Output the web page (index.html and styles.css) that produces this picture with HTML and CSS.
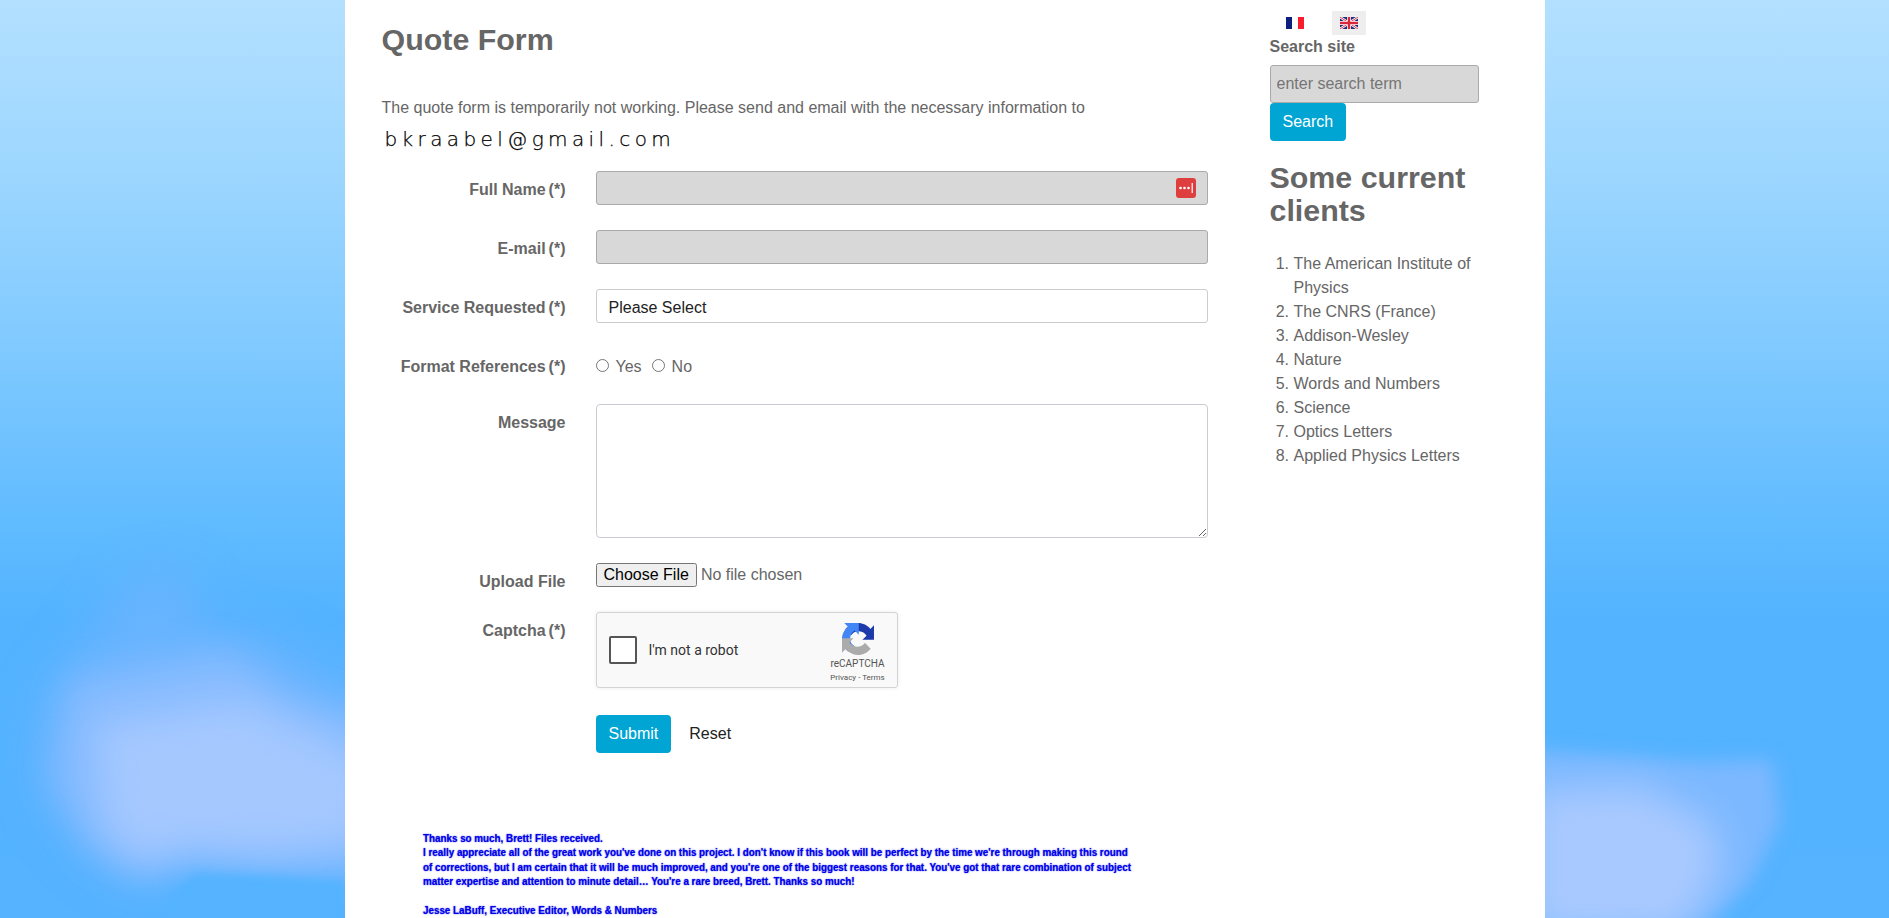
FILE: index.html
```html
<!DOCTYPE html>
<html lang="en">
<head>
<meta charset="utf-8">
<title>Quote Form</title>
<link rel="stylesheet" href="styles.css">
</head>
<body>
<svg class="sky" viewBox="0 0 1889 918" preserveAspectRatio="none" aria-hidden="true">
  <defs>
    <filter id="wide" x="-30%" y="-30%" width="160%" height="160%"><feGaussianBlur stdDeviation="24"/></filter>
    <filter id="soft" x="-30%" y="-30%" width="160%" height="160%"><feGaussianBlur stdDeviation="18"/></filter>
    <filter id="mid" x="-30%" y="-30%" width="160%" height="160%"><feGaussianBlur stdDeviation="9"/></filter>
    <filter id="crisp" x="-30%" y="-30%" width="160%" height="160%"><feGaussianBlur stdDeviation="5"/></filter>
  </defs>
  <g filter="url(#wide)" fill="#6fb4ff" opacity=".75">
    <path d="M130 575 L190 570 L200 625 L280 640 L370 695 L370 880 L270 875 L185 865 L142 888 L84 852 L38 790 L40 700 Z"/>
  </g>
  <g filter="url(#soft)" fill="#8dbdff" opacity=".85">
    <path d="M70 680 L230 650 L300 700 L370 715 L370 870 L270 870 L182 862 L142 880 L90 848 L52 780 Z"/>
  </g>
  <g filter="url(#soft)" fill="#a5c8ff">
    <path d="M95 725 L240 700 L370 760 L370 840 L270 850 L182 845 L142 860 L105 825 Z"/>
  </g>
  <g filter="url(#mid)" fill="#7cb8ff">
    <path d="M1530 750 L1700 762 L1772 760 L1780 820 L1752 880 L1705 925 L1530 930 Z"/>
  </g>
  <g filter="url(#soft)" fill="#a8c9ff">
    <path d="M1530 790 L1640 785 L1715 825 L1720 875 L1680 935 L1530 935 Z"/>
  </g>
  <g filter="url(#crisp)" fill="#55b3ff">
    <path d="M175 890 L195 874 L260 876 L345 882 L345 930 L160 930 Z"/>
  </g>
</svg>

<div class="page">
  <main class="main">
    <h1 class="title">Quote Form</h1>
    <p class="notice">The quote form is temporarily not working. Please send and email with the necessary information to</p>
    <p class="hand">bkraabel@gmail.com</p>

    <form class="form">
      <label class="label">Full Name<span class="req">(*)</span></label>
      <div class="control">
        <input class="field field-grey" type="text">
        <svg class="pass" viewBox="0 0 20 20" aria-hidden="true">
          <rect width="20" height="20" rx="3" fill="#df3e3e"/>
          <circle cx="4.5" cy="10" r="1.3" fill="#fff"/><circle cx="8.5" cy="10" r="1.3" fill="#fff"/><circle cx="12.5" cy="10" r="1.3" fill="#fff"/>
          <rect x="15.6" y="5" width="1.2" height="10" fill="#fff"/>
        </svg>
      </div>

      <label class="label">E-mail<span class="req">(*)</span></label>
      <div class="control"><input class="field field-grey" type="text"></div>

      <label class="label">Service Requested<span class="req">(*)</span></label>
      <div class="control"><select class="field field-select"><option>Please Select</option></select></div>

      <label class="label">Format References<span class="req">(*)</span></label>
      <div class="control control-radio">
        <label class="radio"><input type="radio" name="fmt"> Yes</label>
        <label class="radio"><input type="radio" name="fmt"> No</label>
      </div>

      <label class="label">Message</label>
      <div class="control"><textarea class="area"></textarea></div>

      <label class="label">Upload File</label>
      <div class="control control-file"><input class="file" type="file"></div>

      <label class="label">Captcha<span class="req">(*)</span></label>
      <div class="control">
        <div class="captcha">
          <span class="check"></span>
          <span class="robot">I'm not a robot</span>
          <div class="brand">
            <svg class="recap" viewBox="0 0 64 64" aria-hidden="true">
              <path fill="#1c3aa9" d="M64 31.955l-.033-1.37V4.687l-7.16 7.16C50.948 4.674 42.033.093 32.05.093c-10.4 0-19.622 4.96-25.458 12.64l11.76 11.88a15.55 15.55 0 0 1 4.757-5.342c2.053-1.602 4.962-2.913 9.94-2.913.6 0 1.064.07 1.405.2 6.168.487 11.514 3.89 14.66 8.83l-8.32 8.32c10.54-.04 22.45-.07 25.2 0"/>
              <path fill="#4285f4" d="M31.862.094l-1.37.033H4.594l7.16 7.16C4.58 13.147 0 22.06 0 32.046c0 10.4 4.96 19.622 12.64 25.458l11.88-11.76a15.55 15.55 0 0 1-5.342-4.757c-1.602-2.053-2.913-4.962-2.913-9.94 0-.6.07-1.064.2-1.405.487-6.168 3.89-11.514 8.83-14.66l8.32 8.32c-.04-10.54-.07-22.45 0-25.2"/>
              <path fill="#ababab" d="M.001 32.045l.033 1.37v25.898l7.16-7.16c5.86 7.173 14.774 11.754 24.76 11.754 10.4 0 19.622-4.96 25.458-12.64l-11.76-11.88a15.55 15.55 0 0 1-4.757 5.342c-2.053 1.602-4.962 2.913-9.94 2.913-.6 0-1.064-.07-1.405-.2-6.168-.487-11.514-3.89-14.66-8.83l8.32-8.32c-10.54.04-22.45.07-25.2 0"/>
            </svg>
            <span class="brand-name">reCAPTCHA</span>
            <span class="brand-links">Privacy - Terms</span>
          </div>
        </div>
      </div>

      <span class="label"></span>
      <div class="control control-actions">
        <button class="btn" type="button">Submit</button>
        <button class="reset" type="reset">Reset</button>
      </div>
    </form>

    <div class="quote">
      <p>Thanks so much, Brett! Files received.<br>I really appreciate all of the great work you've done on this project. I don't know if this book will be perfect by the time we're through making this round<br>of corrections, but I am certain that it will be much improved, and you're one of the biggest reasons for that. You've got that rare combination of subject<br>matter expertise and attention to minute detail… You're a rare breed, Brett. Thanks so much!</p>
      <p class="quote-by">Jesse LaBuff, Executive Editor, Words &amp; Numbers</p>
    </div>
  </main>

  <aside class="side">
    <div class="langs">
      <a class="lang">
        <svg class="flag" viewBox="0 0 18 12" aria-hidden="true"><rect width="6" height="12" fill="#0b1f7e"/><rect x="6" width="6" height="12" fill="#fff"/><rect x="12" width="6" height="12" fill="#f91c2b"/></svg>
      </a>
      <a class="lang lang-on">
        <svg class="flag" viewBox="0 0 60 40" aria-hidden="true">
          <rect width="60" height="40" fill="#1f2f7f"/>
          <path d="M0 0L60 40M60 0L0 40" stroke="#fff" stroke-width="8"/>
          <path d="M0 0L60 40M60 0L0 40" stroke="#d8263a" stroke-width="3"/>
          <path d="M30 0V40M0 20H60" stroke="#fff" stroke-width="13"/>
          <path d="M30 0V40M0 20H60" stroke="#d8263a" stroke-width="8"/>
        </svg>
      </a>
    </div>
    <div class="search-label">Search site</div>
    <input class="search-input" type="text" placeholder="enter search term">
    <button class="btn search-btn" type="button">Search</button>
    <h2 class="side-title">Some current clients</h2>
    <ol class="clients">
      <li>The American Institute of Physics</li>
      <li>The CNRS (France)</li>
      <li>Addison-Wesley</li>
      <li>Nature</li>
      <li>Words and Numbers</li>
      <li>Science</li>
      <li>Optics Letters</li>
      <li>Applied Physics Letters</li>
    </ol>
  </aside>
</div>
</body>
</html>
```

FILE: styles.css
```css
* { box-sizing: border-box; }
html, body { margin: 0; padding: 0; height: 100%; overflow: hidden; }
body {
  font-family: "Liberation Sans", Arial, sans-serif;
  font-size: 16px;
  line-height: 24px;
  color: #666;
  background: linear-gradient(to bottom, #b3e0ff 0, #9cd6ff 176px, #7fc9ff 351px, #60bbff 527px, #53b3ff 620px, #55b3ff 100%);
}
.sky { position: fixed; left: 0; top: 0; width: 100%; height: 100%; }
.page {
  position: relative;
  width: 1200px;
  height: 100vh;
  margin: 0 auto;
  background: #fff;
  overflow: hidden;
  display: flex;
}
.main { width: 925px; padding-left: 37px; flex: none; }
.title {
  margin: 23px 0 0;
  font-size: 30.4px;
  line-height: 33px;
  font-weight: 700;
  color: #666;
}
.notice { margin: 40px 0 0; }
.hand {
  margin: 4px 0 0;
  padding-left: 3px;
  height: 30px;
  font-family: "DejaVu Sans", sans-serif;
  font-weight: 200;
  font-size: 20px;
  line-height: 30px;
  letter-spacing: 4.4px;
  color: #000;
  -webkit-text-stroke: .25px #000;
}
.form {
  margin-top: 17px;
  display: grid;
  grid-template-columns: 184px 612px;
  column-gap: 30px;
  align-items: start;
}
.label {
  display: block;
  padding-top: 7px;
  text-align: right;
  font-weight: 700;
  color: #666;
}
.req { margin-left: 3px; }
.control { position: relative; margin-bottom: 25px; }
.field {
  display: block;
  width: 100%;
  height: 34px;
  border-radius: 3px;
  font: 16px "Liberation Sans", Arial, sans-serif;
}
.field-grey { background: #d8d8d8; border: 1px solid #aaa; }
.field-select {
  appearance: none;
  background: #fff;
  border: 1px solid #ccc;
  padding: 2px 12px 0;
  color: #222;
}
.pass { position: absolute; right: 12px; top: 7px; width: 20px; height: 20px; }
.control-radio { height: 31px; padding-top: 7px; margin-bottom: 25px; display: flex; gap: 10px; }
.radio { display: flex; align-items: center; height: 24px; font-weight: 400; }
.radio input { margin: 0 7px 4px 0; width: 13px; height: 13px; }
.area {
  display: block;
  width: 100%;
  height: 134px;
  background: #fff;
  border: 1px solid #c9ccd2;
  border-radius: 4px;
}
.control-file { margin-bottom: 25px; height: 24px; }
.file { font: 16px "Liberation Sans", Arial, sans-serif; color: #666; display: block; }
.captcha {
  position: relative;
  width: 302px;
  height: 76px;
  background: #f9f9f9;
  border: 1px solid #d3d3d3;
  border-radius: 3px;
  box-shadow: 0 0 4px rgba(0,0,0,.08);
  display: flex;
  align-items: center;
  padding-left: 12px;
}
.check {
  width: 28px;
  height: 28px;
  background: #fff;
  border: 2px solid #555;
  border-radius: 2px;
  flex: none;
}
.robot {
  margin-left: 12px;
  font: 14px Roboto, "Liberation Sans", sans-serif;
  color: #333;
}
.brand {
  position: absolute;
  right: 10px;
  top: 10px;
  width: 58px;
  display: flex;
  flex-direction: column;
  align-items: center;
  font-family: Roboto, "Liberation Sans", sans-serif;
  color: #555;
}
.recap { width: 32px; height: 32px; display: block; }
.brand-name { font-size: 10px; line-height: 12px; margin-top: 3px; }
.brand-links { font-size: 8px; line-height: 10px; margin-top: 3px; white-space: nowrap; }
.control-actions { display: flex; align-items: center; gap: 18px; margin-top: 2px; margin-bottom: 0; }
.btn {
  height: 38px;
  padding: 0 13px;
  background: #01a5d3;
  color: #fff;
  border: 0;
  border-radius: 4px;
  font: 16px "Liberation Sans", Arial, sans-serif;
}
.reset {
  background: none;
  border: 0;
  padding: 0;
  font: 16px "Liberation Sans", Arial, sans-serif;
  color: #222;
}
.quote {
  margin: 78px 0 0 41px;
  font-family: "Liberation Sans", sans-serif;
  font-size: 11.5px;
  font-weight: 700;
  line-height: 14.4px;
  color: #0000e6;
  white-space: nowrap;
  text-shadow: 0 0 1.5px #3333ff;
  transform: scaleX(.855);
  transform-origin: left top;
}
.quote p { margin: 0; }
.quote .quote-by { margin-top: 14.4px; }
.side { width: 209px; flex: none; }
.langs { display: flex; height: 35px; padding: 11px 0 0 8px; }
.lang { width: 34px; height: 24px; display: flex; align-items: center; justify-content: center; }
.lang + .lang { margin-left: 20px; }
.lang-on { background: #eee; }
.flag { width: 18px; height: 12px; display: block; }
.search-label { font-weight: 700; height: 30px; }
.search-input {
  display: block;
  width: 209px;
  height: 38px;
  padding: 0 6px;
  background: #d8d8d8;
  border: 1px solid #aaa;
  border-radius: 3px;
  font: 16px "Liberation Sans", Arial, sans-serif;
  color: #666;
}
.search-input::placeholder { color: #757575; opacity: 1; }
.search-btn { display: block; width: 76px; }
.side-title {
  margin: 20px 0 0;
  font-size: 30.4px;
  line-height: 33px;
  font-weight: 700;
  color: #666;
}
.clients { margin: 25px 0 0; padding-left: 24px; }
```
